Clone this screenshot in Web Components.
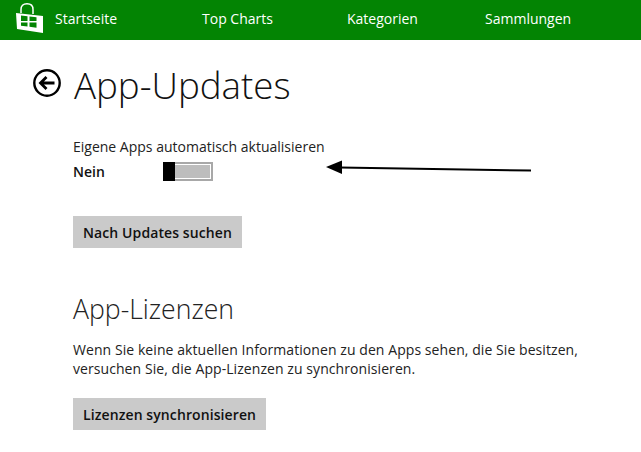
<!DOCTYPE html>
<html lang="de">
<head>
<meta charset="utf-8">
<title>App-Updates</title>
<style>
  html, body { margin: 0; height: 100%; background: #fff; overflow: hidden; }
  body { font-family: "Open Sans", "Noto Sans", sans-serif; color: #1a1a1a; position: relative; }
</style>
</head>
<body>
<store-nav>
  <nav-item style="width:147px">Startseite</nav-item>
  <nav-item style="width:145px">Top Charts</nav-item>
  <nav-item style="width:138px">Kategorien</nav-item>
  <nav-item>Sammlungen</nav-item>
</store-nav>
<page-title>App-Updates</page-title>
<main-column>
  <toggle-row label="Eigene Apps automatisch aktualisieren" state="Nein"></toggle-row>
  <flat-button style="margin-top:35px">Nach Updates suchen</flat-button>
  <section-head>App-Lizenzen</section-head>
  <body-text>Wenn Sie keine aktuellen Informationen zu den Apps sehen, die Sie besitzen,<br>versuchen Sie, die App-Lizenzen zu synchronisieren.</body-text>
  <flat-button style="margin-top:20px">Lizenzen synchronisieren</flat-button>
</main-column>
<note-arrow></note-arrow>

<script>
// Top bar
class StoreNav extends HTMLElement {
  constructor() {
    super();
    this.attachShadow({ mode: 'open' });
    this.shadowRoot.innerHTML = `
      <style>
        :host { display: flex; align-items: center; height: 40px; background: #038403; box-sizing: border-box; padding-left: 16px; }
        svg { width: 28px; height: 31px; margin-right: 11px; flex: none; margin-top: -3px; }
      </style>
      <svg viewBox="0 0 28 31">
        <path d="M5 10V6.500C5 3 7 .8 11 .8s6 2.200 6 5.700V11" fill="none" stroke="#fff" stroke-width="1.500"/>
        <path d="M0 10 27 13V30L1 26Z" fill="#fff"/>
        <path d="M5 12.500 11.500 13.200V18H5ZM13.500 13.400 20.500 14.200V18H13.500ZM5 19.500H11.500V23.500L5 22.700ZM13.500 19.500H20.500V24.700L13.500 23.800Z" fill="#038403"/>
      </svg>
      <slot></slot>`;
  }
}
customElements.define('store-nav', StoreNav);

class NavItem extends HTMLElement {
  constructor() {
    super();
    this.attachShadow({ mode: 'open' });
    this.shadowRoot.innerHTML = `
      <style>
        :host { display: block; color: #fff; font-size: 14px; line-height: 20px; flex: none; margin-top: -2px; }
      </style>
      <slot></slot>`;
  }
}
customElements.define('nav-item', NavItem);

// Page heading with back button
class PageTitle extends HTMLElement {
  constructor() {
    super();
    this.attachShadow({ mode: 'open' });
    this.shadowRoot.innerHTML = `
      <style>
        :host { display: flex; align-items: center; gap: 13px; padding: 24px 0 0 33px; height: 42px; }
        svg { width: 28px; height: 28px; flex: none; margin-top: -5px; }
        span { font-size: 36.700px; font-weight: 300; line-height: 42px; color: #111; }
      </style>
      <svg viewBox="0 0 28 28" fill="none" stroke="#000">
        <circle cx="14" cy="14" r="12.700" stroke-width="2.400"/>
        <path d="M21.500 14H7.500M13.500 8 7.500 14l6 6" stroke-width="2.800"/>
      </svg>
      <span><slot></slot></span>`;
  }
}
customElements.define('page-title', PageTitle);

class MainColumn extends HTMLElement {
  constructor() {
    super();
    this.attachShadow({ mode: 'open' });
    this.shadowRoot.innerHTML = `
      <style>
        :host { display: flex; flex-direction: column; align-items: flex-start; padding: 32px 0 0 73px; }
      </style>
      <slot></slot>`;
  }
}
customElements.define('main-column', MainColumn);

// Label, state text and switch
class ToggleRow extends HTMLElement {
  constructor() {
    super();
    this.attachShadow({ mode: 'open' });
    const label = this.getAttribute('label');
    const state = this.getAttribute('state');
    this.shadowRoot.innerHTML = `
      <style>
        :host { display: block; }
        .label { font-size: 14px; line-height: 18px; color: #222; }
        .row { display: flex; align-items: center; margin-top: 5px; height: 20px; }
        .state { width: 90px; font-size: 14px; font-weight: 600; line-height: 20px; color: #111; margin-top: 2px; }
        .track { box-sizing: border-box; width: 50px; height: 19px; border: 2px solid #a8a8a8; background: #bdbdbd; position: relative; outline: 1px solid #fff; outline-offset: -3px; }
        .thumb { position: absolute; left: -2px; top: -2px; width: 12px; height: 19px; background: #000; }
      </style>
      <div class="label">${label}</div>
      <div class="row">
        <div class="state">${state}</div>
        <div class="track"><div class="thumb"></div></div>
      </div>`;
  }
}
customElements.define('toggle-row', ToggleRow);

class FlatButton extends HTMLElement {
  constructor() {
    super();
    this.attachShadow({ mode: 'open' });
    this.shadowRoot.innerHTML = `
      <style>
        :host { display: block; background: #cacaca; color: #111; font-size: 14px; font-weight: 600; line-height: 34px; height: 32px; padding: 0 10px; letter-spacing: .1px; }
      </style>
      <slot></slot>`;
  }
}
customElements.define('flat-button', FlatButton);

class SectionHead extends HTMLElement {
  constructor() {
    super();
    this.attachShadow({ mode: 'open' });
    this.shadowRoot.innerHTML = `
      <style>
        :host { display: block; font-size: 26.600px; font-weight: 300; line-height: 32px; color: #222; margin-top: 45px; }
      </style>
      <slot></slot>`;
  }
}
customElements.define('section-head', SectionHead);

class BodyText extends HTMLElement {
  constructor() {
    super();
    this.attachShadow({ mode: 'open' });
    this.shadowRoot.innerHTML = `
      <style>
        :host { display: block; font-size: 14px; line-height: 19px; letter-spacing: .07px; color: #222; margin-top: 15px; white-space: nowrap; }
      </style>
      <slot></slot>`;
  }
}
customElements.define('body-text', BodyText);

// Hand drawn annotation lying over the page
class NoteArrow extends HTMLElement {
  constructor() {
    super();
    this.attachShadow({ mode: 'open' });
    this.shadowRoot.innerHTML = `
      <style>
        :host { display: block; position: absolute; left: 320px; top: 155px; width: 220px; height: 25px; }
        svg { display: block; }
      </style>
      <svg width="220" height="25" viewBox="0 0 220 25">
        <path d="M20 12.500 211 15.500" stroke="#000" stroke-width="2" fill="none"/>
        <path d="M6 12 22 5.500V19Z" fill="#000"/>
      </svg>`;
  }
}
customElements.define('note-arrow', NoteArrow);
</script>
</body>
</html>
